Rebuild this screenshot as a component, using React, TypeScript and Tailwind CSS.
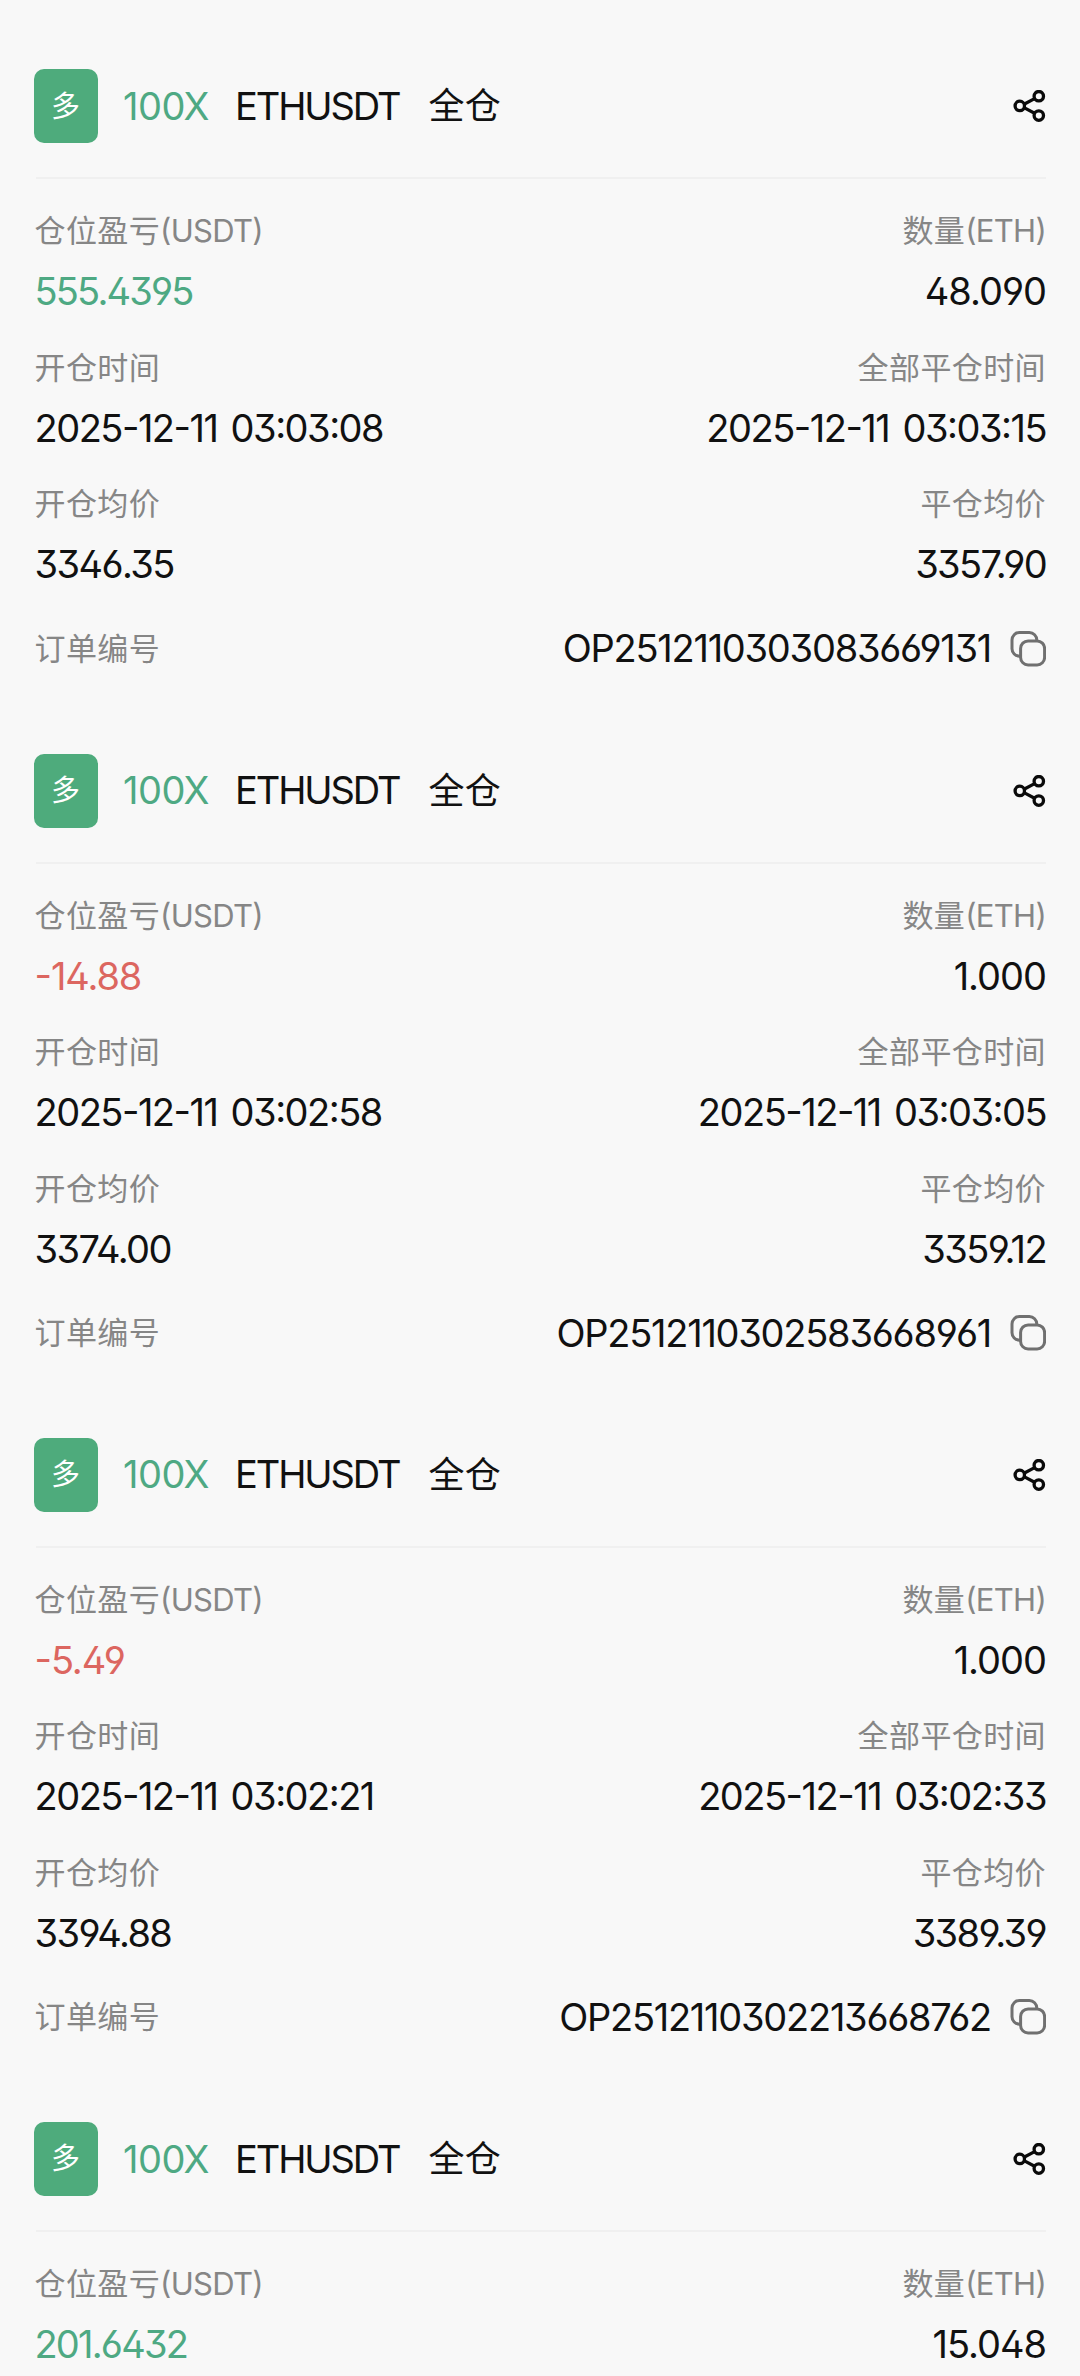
type Position = {
  pnl: string
  profit: boolean
  amount: string
  openTime: string
  closeTime: string
  openPrice: string
  closePrice: string
  orderNo?: string
}

const POSITIONS: Position[] = [
  {
    pnl: "555.4395",
    profit: true,
    amount: "48.090",
    openTime: "2025-12-11 03:03:08",
    closeTime: "2025-12-11 03:03:15",
    openPrice: "3346.35",
    closePrice: "3357.90",
    orderNo: "OP2512110303083669131",
  },
  {
    pnl: "-14.88",
    profit: false,
    amount: "1.000",
    openTime: "2025-12-11 03:02:58",
    closeTime: "2025-12-11 03:03:05",
    openPrice: "3374.00",
    closePrice: "3359.12",
    orderNo: "OP2512110302583668961",
  },
  {
    pnl: "-5.49",
    profit: false,
    amount: "1.000",
    openTime: "2025-12-11 03:02:21",
    closeTime: "2025-12-11 03:02:33",
    openPrice: "3394.88",
    closePrice: "3389.39",
    orderNo: "OP2512110302213668762",
  },
  {
    pnl: "201.6432",
    profit: true,
    amount: "15.048",
    openTime: "",
    closeTime: "",
    openPrice: "",
    closePrice: "",
  },
]

function ShareIcon() {
  return (
    <svg className="h-8 w-[33px]" viewBox="0 0 33 32" fill="none" stroke="#0a0a0a" strokeWidth="3.3">
      <path d="M11 14.200L21.600 8.600M11 17.600L21.600 23.200" />
      <circle cx="6.8" cy="15.9" r="4.7" />
      <circle cx="25.8" cy="6.2" r="4.7" />
      <circle cx="25.8" cy="25.6" r="4.7" />
    </svg>
  )
}

function CopyIcon() {
  return (
    <svg className="h-9 w-9" viewBox="0 0 36 36" fill="none" stroke="#707070" strokeWidth="3">
      <rect x="10.6" y="9.9" width="24" height="24" rx="7.5" />
      <path d="M26.800 9.900V9a7.500 7.500 0 0 0-7.500-7.500H9.500A7.500 7.500 0 0 0 2 9v8.700a7.500 7.500 0 0 0 7.500 7.500h1.100" />
    </svg>
  )
}

type FieldProps = {
  label: string
  unit?: string
  value: string
  right?: boolean
  style?: string
}

const TIME = "text-[#111111] tracking-[-1.5px] [word-spacing:4px]"

function Field({ label, unit, value, right, style = "text-[#111111] tracking-[-1.6px]" }: FieldProps) {
  return (
    <div className={right ? "text-right" : "text-left"}>
      <p className="text-[31px] leading-[60px] tracking-[0.4px] text-[#868686]">
        {label}
        {unit && <span className="tracking-[-0.7px]">({unit})</span>}
      </p>
      <p className={`h-[60px] text-[38px] leading-[60px] ${style}`}>{value}</p>
    </div>
  )
}

function PositionCard({ item }: { item: Position }) {
  return (
    <article className="h-[684.3px]">
      <header className="ml-px flex h-[144px] items-center border-b-2 border-[#f0f0f0]">
        <div className="-ml-0.5 flex h-[74px] w-16 items-center justify-center rounded-[10px] bg-[#4eab7c] text-[29px] text-white">多</div>
        <span className="ml-[25.5px] text-[38px] tracking-[-0.5px] text-[#4ea983]">100X</span>
        <span className="ml-[26px] text-[38px] tracking-[-2.1px] text-[#111111]">ETHUSDT</span>
        <span className="ml-[29px] text-[36px] tracking-[0.4px] text-[#111111]">全仓</span>
        <div className="ml-auto">
          <ShareIcon />
        </div>
      </header>
      <div className="mt-[22px] flex flex-col gap-[16.5px]">
        <div className="flex justify-between">
          <Field
            label="仓位盈亏"
            unit="USDT"
            value={item.pnl}
            style={item.profit ? "text-[#4ea983] tracking-[-1.8px]" : "text-[#dc6660] tracking-[-1.1px]"}
          />
          <Field label="数量" unit="ETH" value={item.amount} right style="text-[#111111] tracking-[-1px]" />
        </div>
        {item.orderNo && (
          <>
            <div className="flex justify-between">
              <Field label="开仓时间" value={item.openTime} style={TIME} />
              <Field label="全部平仓时间" value={item.closeTime} right style={TIME} />
            </div>
            <div className="flex justify-between">
              <Field label="开仓均价" value={item.openPrice} />
              <Field label="平仓均价" value={item.closePrice} right />
            </div>
          </>
        )}
      </div>
      {item.orderNo && (
        <div className="mt-[24.5px] flex h-[60px] items-center justify-between">
          <span className="text-[31px] tracking-[0.4px] text-[#868686]">订单编号</span>
          <div className="flex items-center">
            <span className="text-[38px] tracking-[-1.25px] text-[#111111]">{item.orderNo}</span>
            <div className="ml-[19px]">
              <CopyIcon />
            </div>
          </div>
        </div>
      )}
    </article>
  )
}

export default function App() {
  return (
    <main className="h-[2376px] w-[1080px] overflow-hidden bg-[#f8f8f8] pt-[35.3px] pr-[34px] pl-[34.5px] font-['Inter','Noto_Sans_CJK_SC',sans-serif] font-normal [font-feature-settings:'cv09','ss01','case']">
      {POSITIONS.map((item) => (
        <PositionCard key={item.pnl} item={item} />
      ))}
    </main>
  )
}
